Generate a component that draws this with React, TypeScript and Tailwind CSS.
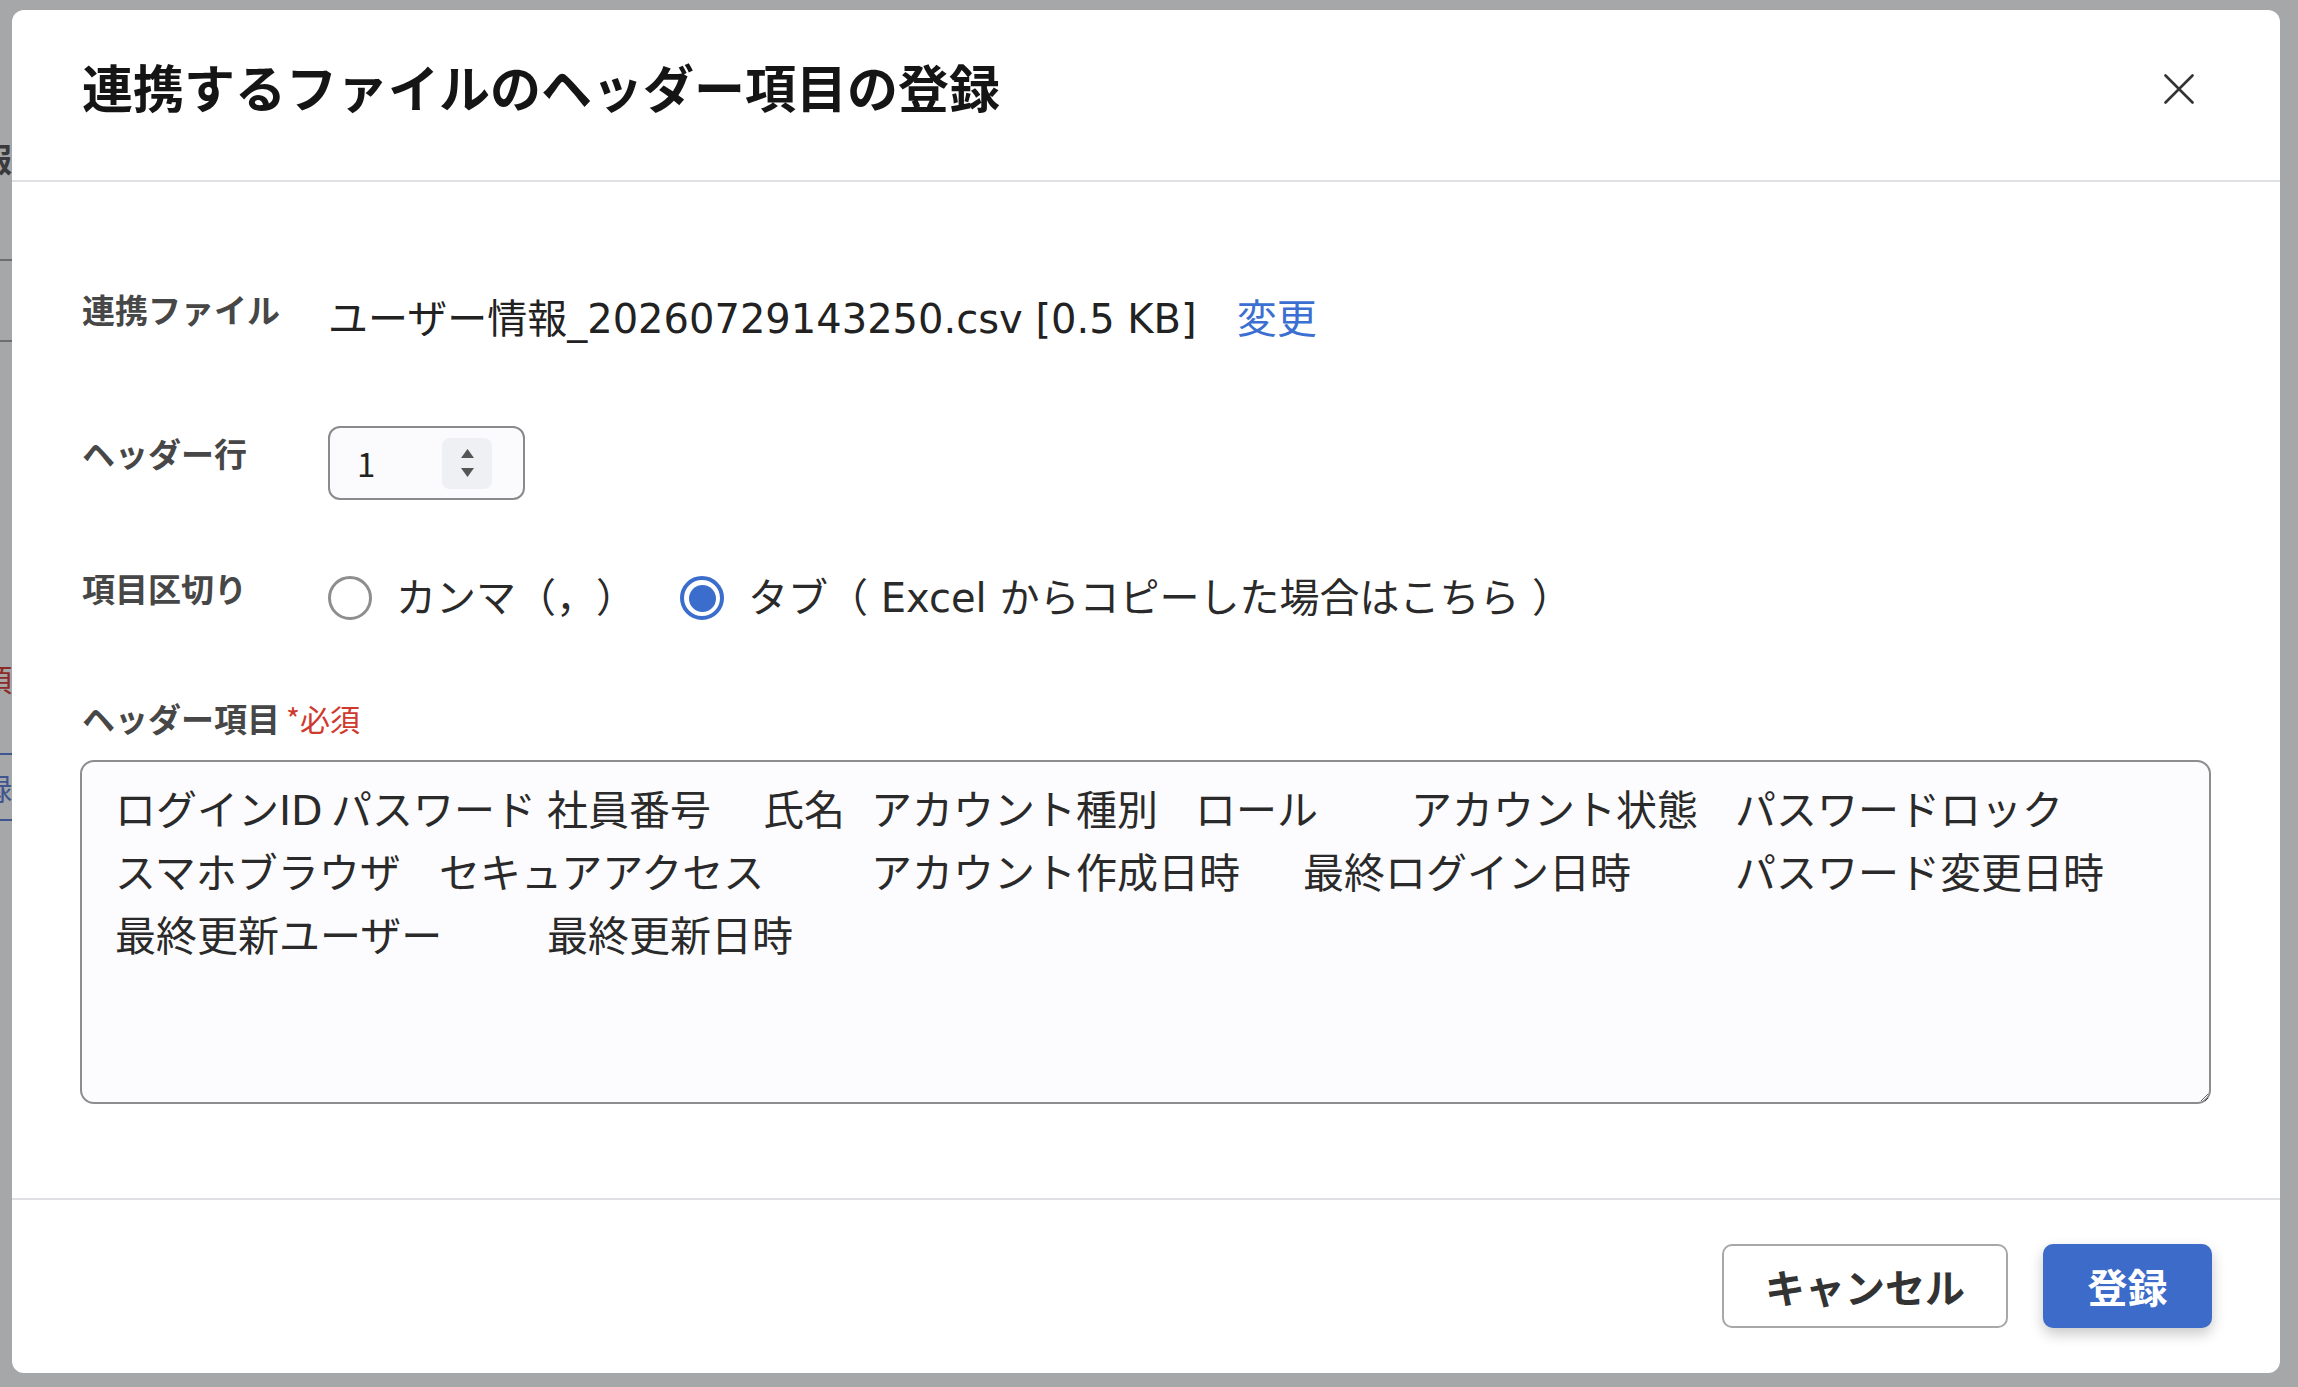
import React from "react";

const headerItems = [
  "ログインID",
  "パスワード",
  "社員番号",
  "氏名",
  "アカウント種別",
  "ロール",
  "アカウント状態",
  "パスワードロック",
  "スマホブラウザ",
  "セキュアアクセス",
  "アカウント作成日時",
  "最終ログイン日時",
  "パスワード変更日時",
  "最終更新ユーザー",
  "最終更新日時",
].join("\t");

// Meiryo-like: Verdana-width latin, CJK from Noto
const bodyFont = "font-['DejaVu_Sans','Noto_Sans_CJK_JP',sans-serif]";

const Label = ({ children }: { children: React.ReactNode }) => (
  <div className="w-[246px] ml-[2px] shrink-0 pb-[21px] text-[33px] font-bold text-[#474747] leading-[40px]">
    {children}
  </div>
);

const Radio = ({ checked, label }: { checked?: boolean; label: string }) => (
  <label className="flex items-center gap-[24px] cursor-pointer">
    {checked ? (
      <span className="size-[44px] rounded-full border-[4px] border-[#3b6dcc] flex items-center justify-center">
        <span className="size-[27px] rounded-full bg-[#3b6dcc]" />
      </span>
    ) : (
      <span className="size-[44px] rounded-full border-[3px] border-[#8e8e8e]" />
    )}
    <span className={`${bodyFont} text-[40px] text-[#2a2a2a]`}>{label}</span>
  </label>
);

const BackdropPage = () => (
  <div className="w-[12px] overflow-hidden flex flex-col">
    <div className="mt-[138px] h-[40px] flex justify-end text-[33px] font-bold leading-[40px] text-[#3a3a3c] whitespace-nowrap">
      情報
    </div>
    <div className="mt-[81px] h-[2px] bg-[#6d6e70]" />
    <div className="mt-[79px] h-[2px] bg-[#6d6e70]" />
    <div className="mt-[318px] h-[36px] flex justify-end text-[30px] leading-[36px] text-[#8c2a26] whitespace-nowrap">
      事項
    </div>
    <div className="mt-[57px] h-[2px] bg-[#3f558f]" />
    <div className="h-[64px] flex items-center justify-end text-[30px] text-[#3f558f] whitespace-nowrap">
      登録
    </div>
    <div className="h-[2px] bg-[#3f558f]" />
  </div>
);

export default function App() {
  return (
    <div className="relative h-screen w-full overflow-hidden bg-[#a6a7a9] font-['Noto_Sans_CJK_JP','Noto_Sans_CJK_SC',sans-serif] [text-spacing-trim:space-all]">
      <BackdropPage />

      <div className="absolute left-[12px] top-[10px] w-[2268px] h-[1363px] rounded-[12px] bg-white flex flex-col overflow-hidden">
        {/* header */}
        <div className="h-[172px] shrink-0 flex items-center justify-between pl-[70px] pr-[86px] pb-[18px] border-b-2 border-[#dfe0e3]">
          <h2 className="text-[51px] font-bold leading-none text-[#151515]">
            連携するファイルのヘッダー項目の登録
          </h2>
          <button className="size-[30px] flex items-center justify-center mt-[6px]">
            <svg width="30" height="30" viewBox="0 0 30 30" fill="none">
              <path
                d="M1.5 1.5L28.5 28.5M28.5 1.5L1.5 28.5"
                stroke="#333"
                strokeWidth="2.6"
                strokeLinecap="round"
              />
            </svg>
          </button>
        </div>

        {/* body */}
        <div className="flex-1 flex flex-col pl-[68px] pr-[69px] pt-[101px]">
          <div className="h-[72px] flex items-center">
            <Label>連携ファイル</Label>
            <div className={`${bodyFont} flex items-center text-[40px] text-[#222] whitespace-pre`}>
              <span>ユーザー情報_20260729143250.csv [0.5 KB]</span>
              <a className="ml-[40px] text-[#3b6fd1] cursor-pointer">変更</a>
            </div>
          </div>

          <div className="mt-[71px] h-[74px] flex items-center">
            <Label>ヘッダー行</Label>
            <div className="w-[197px] h-[74px] rounded-[12px] border-2 border-[#8a8a8c] bg-[#fbfbfd] flex items-center justify-between pl-[27px] pr-[31px]">
              <span className="text-[33px] text-[#222] leading-none">1</span>
              <div className="w-[50px] h-[51px] rounded-[8px] bg-[#eef0f4] flex flex-col items-center justify-center gap-[10px]">
                <svg width="13" height="9" viewBox="0 0 13 9">
                  <path d="M6.5 0L13 9H0Z" fill="#555" />
                </svg>
                <svg width="13" height="9" viewBox="0 0 13 9">
                  <path d="M0 0H13L6.5 9Z" fill="#555" />
                </svg>
              </div>
            </div>
          </div>

          <div className="mt-[62px] h-[72px] flex items-center">
            <Label>項目区切り</Label>
            <div className="flex items-center gap-[44px]">
              <Radio label="カンマ（，）" />
              <Radio checked label="タブ（ Excel からコピーした場合はこちら ）" />
            </div>
          </div>

          <div className="mt-[64px] ml-[2px] h-[40px] flex items-end leading-[40px]">
            <span className="text-[33px] font-bold text-[#474747]">ヘッダー項目</span>
            <span className="ml-[6px] text-[30px] text-[#cf3a2e]">*必須</span>
          </div>

          <textarea
            defaultValue={headerItems}
            className={`${bodyFont} mt-[22px] w-full h-[344px] rounded-[14px] border-2 border-[#8d8d8f] bg-[#fcfcfe] pt-[18px] px-[33px] text-[41px] leading-[63px] text-[#2a2a2a] outline-none [tab-size:108px]`}
          />
        </div>

        {/* footer */}
        <div className="h-[175px] shrink-0 border-t-2 border-[#dfe0e3] flex justify-end items-start gap-[35px] pt-[44px] pr-[68px]">
          <button className="w-[286px] h-[84px] rounded-[10px] border-2 border-[#a8a8aa] bg-white text-[40px] font-bold text-[#333]">
            キャンセル
          </button>
          <button className="w-[169px] h-[84px] rounded-[10px] bg-[#3d6bc9] text-[40px] font-bold text-white shadow-[0_6px_14px_rgba(0,0,0,0.22)]">
            登録
          </button>
        </div>
      </div>
    </div>
  );
}
